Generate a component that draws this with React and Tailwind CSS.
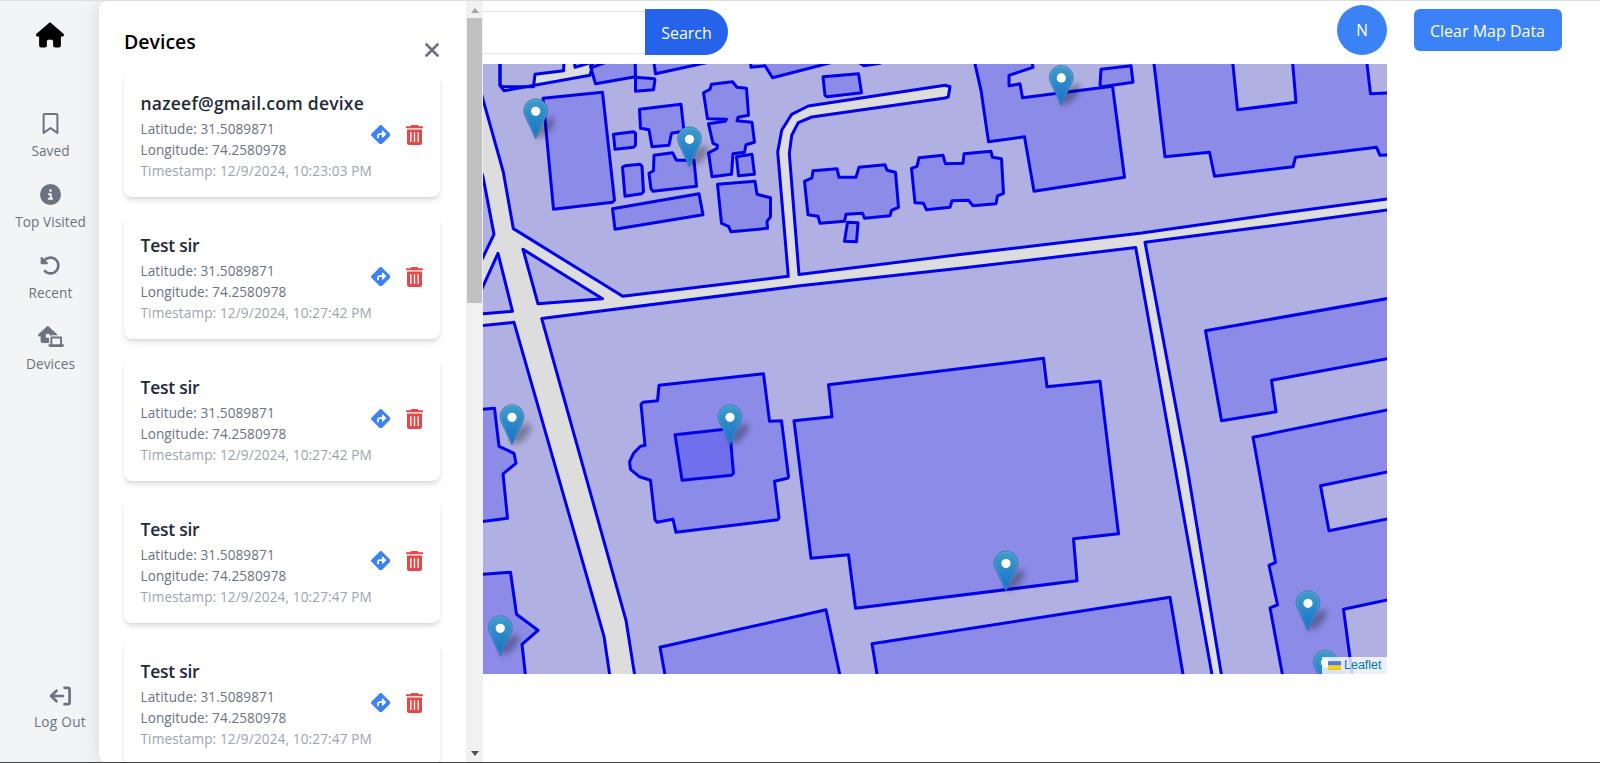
import {
  FaHouse,
  FaRegBookmark,
  FaCircleInfo,
  FaRotateLeft,
  FaHouseLaptop,
  FaDiamondTurnRight,
} from "react-icons/fa6";

const navItems = [
  { label: "Saved", icon: <FaRegBookmark size={21} /> },
  { label: "Top Visited", icon: <FaCircleInfo size={21} /> },
  { label: "Recent", icon: <FaRotateLeft size={21} /> },
  { label: "Devices", icon: <FaHouseLaptop size={21} className="w-[26px]" /> },
];

const devices = [
  { name: "nazeef@gmail.com devixe", time: "12/9/2024, 10:23:03 PM" },
  { name: "Test sir", time: "12/9/2024, 10:27:42 PM" },
  { name: "Test sir", time: "12/9/2024, 10:27:42 PM" },
  { name: "Test sir", time: "12/9/2024, 10:27:47 PM" },
  { name: "Test sir", time: "12/9/2024, 10:27:47 PM" },
];

function LogOutIcon() {
  return (
    <svg width="23" height="20" viewBox="0 0 23 20" fill="none" stroke="currentColor" strokeWidth="2.7" strokeLinecap="round" strokeLinejoin="round">
      <path d="M14 10H2M7.500 4.700 2 10l5.500 5.300" />
      <path d="M15.500 1.800H19a1.600 1.600 0 0 1 1.600 1.600v13.200a1.600 1.600 0 0 1-1.600 1.600h-3.500" />
    </svg>
  );
}

function TrashIcon() {
  return (
    <svg width="17" height="20" viewBox="0 0 17 20" fill="none">
      <path fill="currentColor" fillRule="evenodd" d="M5.300 0h6.400l.9 1.300H16.500a.5.5 0 0 1 .5.500v1a.5.5 0 0 1-.5.500H.5a.5.5 0 0 1-.5-.500v-1a.5.5 0 0 1 .5-.500H4.400zM1 4.600h15V18a2 2 0 0 1-2 2H3a2 2 0 0 1-2-2zM4.200 7.300v9.800h1.300V7.300zM7.850 7.300v9.800h1.300V7.300zM11.500 7.300v9.800h1.300V7.300z" />
    </svg>
  );
}

function Marker({ x, y }) {
  return (
    <g transform={`translate(${x - 12.5} ${y - 41})`}>
      <ellipse cx="21.500" cy="29.500" rx="13" ry="5.500" transform="rotate(-48 21.500 29.500)" fill="#000" opacity="0.33" filter="url(#soft)" />
      <path
        d="M12.500.5C5.900.5.5 5.900.5 12.400c0 2.800 1.300 5.500 2.400 7.800L12.500 40.500l9.500-20.300c1.100-2.300 2.500-4.900 2.500-7.800C24.500 5.900 19.100.5 12.500.5z"
        fill="url(#pin)"
        stroke="#2e6c97"
        strokeOpacity="0.6"
      />
      <path
        d="M12.500 1.500C6.500 1.500 1.500 6.500 1.500 12.400c0 2.600 1.200 5.100 2.300 7.400l8.700 18.500 8.700-18.500c1.100-2.300 2.300-4.700 2.300-7.400 0-5.900-5-10.900-11-10.900z"
        fill="none"
        stroke="#fff"
        strokeOpacity="0.13"
      />
      <circle cx="12.500" cy="13" r="4.600" fill="#fff" />
    </g>
  );
}

// Each path is one land block; overlapping translucent fills darken the buildings.
const blocks = [
  "M470 60V60H500V85L504 90.500L590 75L592 67L640 50H1400V197L1273 214L1141.700 232.700L960 254.300L799 274.300L789.300 153.300L791.700 135L798.300 122.300L811.700 116.700L945 97.700L948.300 96.500L950 86.500L945 85L808.300 105.700L791.700 114L781.700 130L777.700 151.700L788.300 276L622.700 296L513.300 228.300L503.300 171.700L481 92L470 55z",
  "M470 140L483 176.500L494 234L483 257L470 285z",
  "M470 315L483 286L498 253L512.500 311L470 314.500z",
  "M523 249L602.500 298.500L538 303.500z",
  "M470 326.500L514 322L604 636L610.500 680H470z",
  "M541.700 318.300L800 285.500L960 268L1135.700 247.300L1213 680H635.500L626 620z",
  "M1145 242L1260 227L1400 208V690H1224L1187 466z",
];

const buildings = [
  "M500 55V85L503 86.500H533.500L535 74L563.500 70.500L564.500 55z",
  "M574 55L575 67L592 62z",
  "M590.500 66L595.500 83.500L635.500 76.500L635 55H600z",
  "M635.500 77L654.500 78.500L655 79.500L653.500 89.500L635.500 91z",
  "M653 55L655.500 73.500L740 55z",
  "M750 55L751 67L765 65.500L772.500 77.500L840 60L850 50z",
  "M860 63L864 65.500L880 63z",
  "M543 98L602.500 92L614.500 200L612.500 202L553.500 209z",
  "M639.500 109L681 104L684 131L671.500 133L669 145L652 146.500L649 129.500L640.500 128z",
  "M613.500 134L633.500 131.500L635.500 133L635.500 145L633.500 147L615 149z",
  "M622.500 167L625 165.500L640 164L642 166L643.500 191.500L641.500 193.500L625 196z",
  "M654 155L672.500 152.500L676.500 160L694 160L696.500 186L653 191L651 188.500L649 173L653.500 170.500z",
  "M612.500 208.500L699 193.500L703 214.500L615 229z",
  "M703.500 92.500L710 89L711.500 84L732.500 81.500L737 87L746.500 88L748.500 115L738 117L737 120.500L752 122L754.500 142L746 144.500L744.500 152L733 153.500L731.500 174L712 176.500L708.500 152.500L717 148L717.500 145L713 143L708.500 123.500L725 121L726.500 119L707.500 118.500z",
  "M736.500 156.500L752 154L754.500 174L738.500 175.500z",
  "M717.500 184L755 181L757 194L770.500 197.500V216.500L767 221L767.500 228L731 231.500L728.500 226L721.500 223z",
  "M823 76.500L858.500 73.500L861.500 92.500L827 96.500L825 95z",
  "M804.500 181L812 177.500L813 170.500L837 168.500L839 177H856L859 167L885 164.500L887 170L895.500 172L898.500 207L891.500 210L890 215.500L864.500 218L862.500 213L846 214L844.500 221L820 223L818 216L808 214.500z",
  "M847.500 222L858 222.500L856.500 241.500L844.500 241z",
  "M911.500 168L917 166L919 157.500L943 155L945.500 163.500L963 163L964 153.500L991 151L992.500 157L1001.500 158.500L1003.500 193L997.500 195.500L996 203.500L973 205.500L968.500 200L952 200.500L950 207L926.500 209.500L923.500 203L915 202.500z",
  "M973 55L981 90L988.500 141.500L1024.500 136.500L1034 191L1124.500 177L1112.500 86L1022.500 97.500L1020 83.500L1009 85.500V75L1033 67L1030 50z",
  "M1101 69L1131 65.500L1133 82L1102 86.500L1100 84.500z",
  "M1153 55L1165 156.500L1209.500 152L1214.500 176L1293 166.500L1295.500 157L1376.500 147L1380 155L1400 154V92L1370.500 93.500L1366 55H1292L1296 102L1237.500 109.500L1232 55z",
  "M1400 296L1205.500 330.500L1221.500 420.500L1276 411.500L1271.500 380L1400 356z",
  "M1400 407L1253 437L1275.500 562L1269 565L1277.500 604.500L1270 607.500L1283.500 680H1353L1343.500 609L1400 597V516L1329 530.500L1320.500 485.500L1400 469z",
  "M828.500 384.500L1043.500 358L1047 386.500L1100 381L1118.500 533.500L1073.500 538.500L1077 580.500L855.500 608L848.500 554.500L811 558L794 420.500L832 416.500z",
  "M659 385L763.500 373.500L769.500 421L781.500 420.500L788.500 476.500L787.500 478L774.500 481L779 517.500L777.500 519.500L676 532L673 519L657 522L655 519.500L650.500 480L639.500 476.500L630.500 469L629.500 461.500L633.500 453L640.500 446L645 445L641 404L643 402L657.500 400.500z",
  "M675 434.500L729.500 428.500L733.500 473L731.500 475L682 480z",
  "M470 410L494.500 408L499 446L514 453L516 463L503 473.500L507.500 518L470 523z",
  "M470 575L510.500 572L516.500 614L538 630L522 644L526 680H470z",
  "M660 647L826 609.500L841 680H666z",
  "M872 643.500L1170 597L1184 680H878z",
];

const markers = [
  [535.7, 139],
  [689.5, 167],
  [1061.3, 105.6],
  [512, 445],
  [730, 445],
  [500.3, 656],
  [1006, 591.3],
  [1308, 631],
  [1325.5, 690.5],
];

function MapView() {
  return (
    <div className="relative h-[610px] w-[904px] overflow-hidden bg-[#dddddd]">
      <svg className="block" width="904" height="610" viewBox="483 63.700 904 610">
        <defs>
          <linearGradient id="pin" x1="0" y1="0" x2="0" y2="1">
            <stop offset="0" stopColor="#419dcb" />
            <stop offset="1" stopColor="#126fc6" />
          </linearGradient>
          <filter id="soft" x="-50%" y="-50%" width="200%" height="200%">
            <feGaussianBlur stdDeviation="3" />
          </filter>
        </defs>
        <g fill="#0000ff" fillOpacity="0.2" fillRule="evenodd" stroke="#0000ee" strokeWidth="3" strokeLinejoin="round">
          {blocks.map((d) => (
            <path key={d} d={d} />
          ))}
          {buildings.map((d) => (
            <path key={d} d={d} />
          ))}
        </g>
        {markers.map(([x, y]) => (
          <Marker key={`${x}-${y}`} x={x} y={y} />
        ))}
      </svg>
      <div className="absolute right-0 bottom-0 flex h-[17px] w-[65px] items-center gap-[3px] bg-white/80 pl-1.5 font-['Liberation_Sans',sans-serif] text-[12.5px] text-[#0078a8]">
        <svg width="13" height="9" viewBox="0 0 12 8">
          <path fill="#4C7BE1" d="M0 0h12v4H0z" />
          <path fill="#FFD500" d="M0 4h12v3H0z" />
          <path fill="#E0BC00" d="M0 7h12v1H0z" />
        </svg>
        <span>Leaflet</span>
      </div>
    </div>
  );
}

function DeviceCard({ name, time }) {
  const tracking = name.length > 12 ? "tracking-[0.22px]" : "tracking-[-0.25px]";
  return (
    <article className="flex h-[125px] shrink-0 items-center justify-between rounded-lg bg-white pr-[17px] pl-[16.500px] shadow-[0_4px_6px_-1px_rgba(0,0,0,0.12),0_2px_4px_-2px_rgba(0,0,0,0.12)]">
      <div className="min-w-0 flex-1 text-[13.600px] leading-[21px] tracking-[0.08px] whitespace-nowrap text-[#6b7280]">
        <h3 className={`text-[17.500px] leading-[29px] font-semibold text-[#1f2937] ${tracking}`}>{name}</h3>
        <p>Latitude: 31.5089871</p>
        <p>Longitude: 74.2580978</p>
        <p className="tracking-[0.13px] text-[#9ca3af]">Timestamp: {time}</p>
      </div>
      <div className="flex shrink-0 items-center gap-4">
        <button className="text-[#3b82f6]">
          <FaDiamondTurnRight size={19.5} />
        </button>
        <button className="text-[#e54848]">
          <TrashIcon />
        </button>
      </div>
    </article>
  );
}

export default function App() {
  return (
    <div className="flex h-[763px] w-[1600px] overflow-hidden border-t border-b border-t-[#dedede] border-b-[#444444] bg-white font-['Open_Sans','Noto_Sans',sans-serif]">
      <nav className="flex w-[99px] shrink-0 flex-col bg-[#f3f4f6] text-[13.600px] text-[#6b7280]">
        <div className="flex h-[68px] items-center justify-center pl-[1px] text-black">
          <FaHouse size={28} />
        </div>
        <ul className="mt-[41px] flex flex-col pl-[2px]">
          {navItems.map((item) => (
            <li key={item.label} className="flex h-[71px] flex-col items-center">
              <span className="flex h-[26px] items-center">{item.icon}</span>
              <span className="mt-1 leading-[21px] tracking-[0.08px] whitespace-nowrap">{item.label}</span>
            </li>
          ))}
        </ul>
        <div className="mt-auto mb-[30px] flex flex-col items-center pl-[21px]">
          <LogOutIcon />
          <span className="mt-[5px] leading-[21px] tracking-[0.3px]">Log Out</span>
        </div>
      </nav>

      <aside className="z-10 flex w-[384px] shrink-0 bg-[#f3f4f6]">
        <div className="flex min-w-0 flex-1 flex-col rounded-l-lg bg-white pr-[26px] pl-[25px] shadow-[0_0_20px_rgba(0,0,0,0.12)]">
          <header className="flex h-[71px] shrink-0 justify-between">
            <h2 className="mt-[26px] text-[19.500px] leading-[29px] font-semibold text-black">Devices</h2>
            <button className="mt-[42px] flex h-[14px] w-[16px] items-center justify-center text-[#6b7280]">
              <svg width="14" height="14" viewBox="0 0 14 14" stroke="currentColor" strokeWidth="2.700" strokeLinecap="round">
                <path d="M1.500 1.500l11 11M12.500 1.500l-11 11" />
              </svg>
            </button>
          </header>
          <div className="flex flex-col gap-[17px]">
            {devices.map((device, i) => (
              <DeviceCard key={i} {...device} />
            ))}
          </div>
        </div>
        <div className="flex w-[17px] flex-col items-center justify-between bg-[#f1f1f1]">
          <div className="flex flex-col items-center">
            <svg className="mt-[7px] mb-[5px]" width="8" height="5" viewBox="0 0 8 5">
              <path fill="#a3a3a3" d="M4 0l4 5H0z" />
            </svg>
            <div className="h-[285px] w-[15px] bg-[#c1c1c1]" />
          </div>
          <svg className="mb-[6px]" width="8" height="5" viewBox="0 0 8 5">
            <path fill="#505050" d="M0 0h8L4 5z" />
          </svg>
        </div>
      </aside>

      <main className="flex min-w-0 flex-1 flex-col">
        <header className="flex h-[63px] shrink-0">
          <div className="mt-[10px] h-[43px] w-[162px] border-y border-[#e2e6ec]" />
          <button className="mt-[8px] h-[46px] w-[83px] rounded-r-full bg-[#2563eb] pt-[2px] text-[16px] text-white">Search</button>
          <div className="mt-[4px] ml-auto flex h-[50px] w-[50px] items-center justify-center rounded-full bg-[#3b82f6] pt-[2px] text-[15.500px] text-white">N</div>
          <button className="mt-[8px] mr-[38.500px] ml-[26.500px] h-[42px] w-[148px] rounded-md bg-[#3b82f6] pt-[2px] text-[16px] whitespace-nowrap text-white">Clear Map Data</button>
        </header>
        <MapView />
      </main>
    </div>
  );
}
